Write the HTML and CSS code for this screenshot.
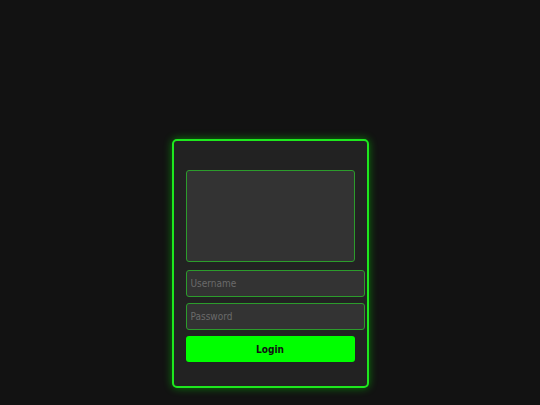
FILE: index.html
```html
<!DOCTYPE html>
<html>
<head>
<meta charset="utf-8">
<link rel="stylesheet" href="styles.css">
</head>
<body>
<div class="page">
  <form class="card">
    <div class="preview"></div>
    <input class="field" type="text" placeholder="Username">
    <input class="field" type="password" placeholder="Password">
    <button class="btn" type="button">Login</button>
  </form>
</div>
</body>
</html>
```
FILE: styles.css
```css
html, body {
  margin: 0;
  padding: 0;
  background: #121212;
  height: 100%;
}
.page {
  display: flex;
  justify-content: center;
  padding-top: 139px;
  font-family: "DejaVu Sans Condensed", "DejaVu Sans", sans-serif;
}
.card {
  width: 169px;
  margin: 0;
  padding: 29px 12px 24px 12px;
  background: #222222;
  border: 2px solid #1ee81e;
  border-radius: 5px;
  box-shadow: 0 0 9px rgba(0, 255, 0, 0.45);
  display: flex;
  flex-direction: column;
}
.preview {
  height: 90px;
  background: #333333;
  border: 1px solid #2c9c2c;
  border-radius: 3px;
  margin-bottom: 8px;
}
.field {
  width: 100%;
  height: 25px;
  padding: 0 4px;
  margin: 0 0 6px 0;
  box-sizing: content-box;
  background: #333333;
  border: 1px solid #2c9c2c;
  border-radius: 3px;
  color: #ccc;
  font-family: "DejaVu Sans Condensed", "DejaVu Sans", sans-serif;
  font-size: 10px;
  outline: none;
}
.field::placeholder {
  color: #6a6a6a;
}
.btn {
  height: 26px;
  margin-top: 0;
  background: #00ff00;
  border: none;
  border-radius: 3px;
  color: #111;
  font-family: "DejaVu Sans Condensed", "DejaVu Sans", sans-serif;
  font-weight: bold;
  font-size: 10px;
  padding: 0;
}
```
